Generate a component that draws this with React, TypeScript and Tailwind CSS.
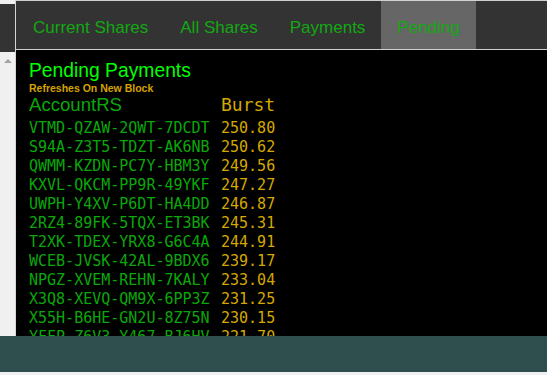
import React from 'react';

const tabs = ['Current Shares', 'All Shares', 'Payments', 'Pending'];

const payments = [
  { account: 'VTMD-QZAW-2QWT-7DCDT', burst: '250.80' },
  { account: 'S94A-Z3T5-TDZT-AK6NB', burst: '250.62' },
  { account: 'QWMM-KZDN-PC7Y-HBM3Y', burst: '249.56' },
  { account: 'KXVL-QKCM-PP9R-49YKF', burst: '247.27' },
  { account: 'UWPH-Y4XV-P6DT-HA4DD', burst: '246.87' },
  { account: '2RZ4-89FK-5TQX-ET3BK', burst: '245.31' },
  { account: 'T2XK-TDEX-YRX8-G6C4A', burst: '244.91' },
  { account: 'WCEB-JVSK-42AL-9BDX6', burst: '239.17' },
  { account: 'NPGZ-XVEM-REHN-7KALY', burst: '233.04' },
  { account: 'X3Q8-XEVQ-QM9X-6PP3Z', burst: '231.25' },
  { account: 'X55H-B6HE-GN2U-8Z75N', burst: '230.15' },
  { account: 'YFFP-Z6V3-Y467-BJ6HV', burst: '221.70' },
  { account: 'M2KQ-7TLD-QW3E-9FHRA', burst: '219.44' }
];

export default function App() {
  return (
    <div className="flex h-[375px] w-[547px] flex-col overflow-hidden bg-black font-['Liberation_Sans',Arial,sans-serif]">
      <div className="flex h-[336px] overflow-hidden">
        {/* scrollbar on the left */}
        <div className="flex w-[16px] shrink-0 flex-col border-r border-[#d4d4d4] bg-[#f0f0f0]">
          <div className="h-[4px]" />
          <div className="h-[48px] bg-[#333333]" />
          <div className="flex justify-center pt-[7px]">
            <div className="h-0 w-0 border-x-[4px] border-b-[4px] border-x-transparent border-b-[#a3a3a3]" />
          </div>
        </div>

        <div className="flex min-w-0 flex-1 flex-col">
          <div className="h-[3px] bg-black" />
          <nav className="flex h-[50px] shrink-0 border-y border-[#d0d0d0] bg-[#333333] pl-px">
            {tabs.map((tab) => (
              <div
                key={tab}
                className={`flex items-center px-4 pt-[5px] text-[17px] leading-[20px] text-[#12a812] ${
                  tab === 'Pending' ? 'bg-[#666666]' : ''
                }`}
              >
                {tab}
              </div>
            ))}
          </nav>

          <div className="pl-[13px] pt-[10px]">
            <h1 className="text-[19.3px] leading-[22px] text-[#00ff00]">Pending Payments</h1>
            <p className="text-[10.5px] font-bold leading-[12px] text-[#d4a300]">Refreshes On New Block</p>

            <div className="grid grid-cols-[192px_auto] items-baseline">
              <div className="text-[18.6px] leading-[21px] text-[#0aa80a]">AccountRS</div>
              <div className="font-['DejaVu_Sans_Mono',monospace] text-[18px] leading-[21px] text-[#d4a800]">Burst</div>
            </div>

            <div className="mt-[4px] font-['DejaVu_Sans_Mono',monospace] text-[15px] leading-[19px]">
              {payments.map((row) => (
                <div key={row.account} className="grid grid-cols-[192px_auto]">
                  <span className="text-[#0aa80a]">{row.account}</span>
                  <span className="text-[#d4a800]">{row.burst}</span>
                </div>
              ))}
            </div>
          </div>
        </div>
      </div>

      <div className="h-[36px] shrink-0 bg-[#2f4f4f]" />
      <div className="h-[3px] shrink-0 bg-[#f0f0f0]" />
    </div>
  );
}
